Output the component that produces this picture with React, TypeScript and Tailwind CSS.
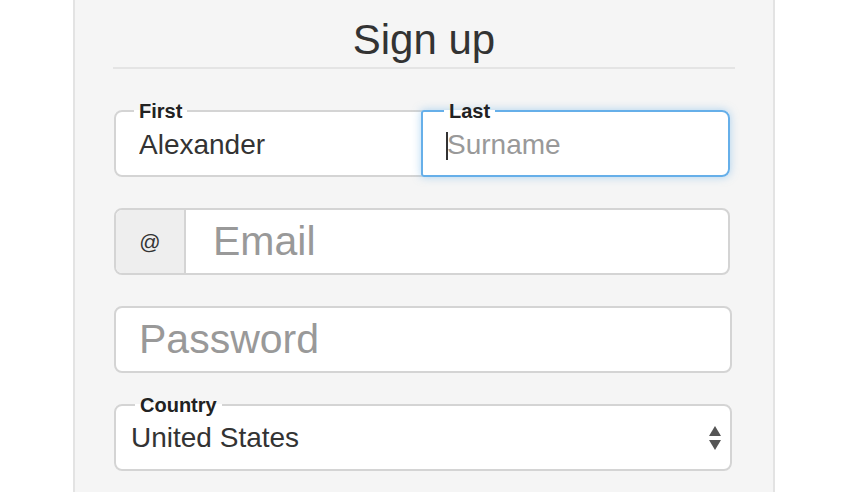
import { useState } from "react";

const font = { fontFamily: '"Liberation Sans", Arial, sans-serif' };

function SelectArrows() {
  return (
    <svg width="14" height="26" viewBox="0 0 14 26" className="shrink-0">
      <path d="M7 1 L13 11 L1 11 Z" fill="#555" />
      <path d="M1 15 L13 15 L7 25 Z" fill="#555" />
    </svg>
  );
}

export default function App() {
  const [first, setFirst] = useState("Alexander");
  const [country, setCountry] = useState("United States");

  return (
    <div className="w-[850px] h-[492px] bg-white overflow-hidden" style={font}>
      <div className="ml-[73px] w-[702px] h-[492px] bg-[#f5f5f5] border-x-2 border-[#e3e3e3] px-[38px]">
        {/* Heading */}
        <h1 className="pt-[16px] text-center text-[42px] leading-[48px] font-normal text-[#333]">Sign up</h1>
        <div className="mt-[3px] h-[2px] bg-[#e4e4e4]" />

        <div className="pl-[1px]">
          {/* Name row */}
          <div className="mt-[32px] flex w-[616px]">
            <fieldset className="flex-1 border-2 border-[#d4d4d4] rounded-l-lg bg-white px-[21px] pb-[8px]">
              <legend className="-ml-[3px] px-[5px] text-[20px] leading-[20px] font-bold text-[#222]">First</legend>
              <input
                value={first}
                onChange={(e) => setFirst(e.target.value)}
                className="block w-full mt-[2px] h-[44px] pl-[2px] bg-transparent outline-none text-[28px] text-[#333]"
              />
            </fieldset>
            <fieldset className="flex-1 -ml-[2px] border-2 border-[#66afe9] rounded-r-lg rounded-l-[3px] bg-white px-[21px] pb-[8px] shadow-[0_0_8px_rgba(102,175,233,0.5)]">
              <legend className="px-[5px] text-[20px] leading-[20px] font-bold text-[#222]">Last</legend>
              <div className="relative mt-[2px] pl-[2px]">
                <input
                  placeholder="Surname"
                  className="block w-full h-[44px] pl-[1px] bg-transparent outline-none caret-transparent text-[28px] text-[#333] placeholder:text-[#999]"
                />
                <span className="absolute left-[2px] top-[9px] w-[2px] h-[28px] bg-[#333]" />
              </div>
            </fieldset>
          </div>

          {/* Email */}
          <div className="mt-[31px] flex w-[616px] h-[67px] border-2 border-[#d4d4d4] rounded-lg overflow-hidden bg-white">
            <div className="w-[70px] shrink-0 flex items-center justify-center bg-[#eeeeee] border-r-2 border-[#d4d4d4] text-[21px] text-[#333]">
              @
            </div>
            <input
              type="email"
              placeholder="Email"
              className="flex-1 px-[27px] bg-transparent outline-none text-[41px] text-[#333] placeholder:text-[#999]"
            />
          </div>

          {/* Password */}
          <div className="mt-[31px] flex w-[618px] h-[67px] border-2 border-[#d4d4d4] rounded-lg bg-white">
            <input
              type="password"
              placeholder="Password"
              className="flex-1 px-[23px] bg-transparent outline-none text-[41px] text-[#333] placeholder:text-[#999]"
            />
          </div>

          {/* Country */}
          <fieldset className="mt-[22px] w-[618px] border-2 border-[#d4d4d4] rounded-lg bg-white pl-[15px] pr-[8px] pb-[9px]">
            <legend className="ml-[4px] px-[5px] text-[20px] leading-[20px] font-bold text-[#222]">Country</legend>
            <div className="flex items-center mt-[1px] h-[44px]">
              <select
                value={country}
                onChange={(e) => setCountry(e.target.value)}
                className="flex-1 appearance-none bg-transparent outline-none text-[28px] text-[#333]"
                style={font}
              >
                <option>United States</option>
                <option>Canada</option>
                <option>United Kingdom</option>
              </select>
              <SelectArrows />
            </div>
          </fieldset>
        </div>
      </div>
    </div>
  );
}
